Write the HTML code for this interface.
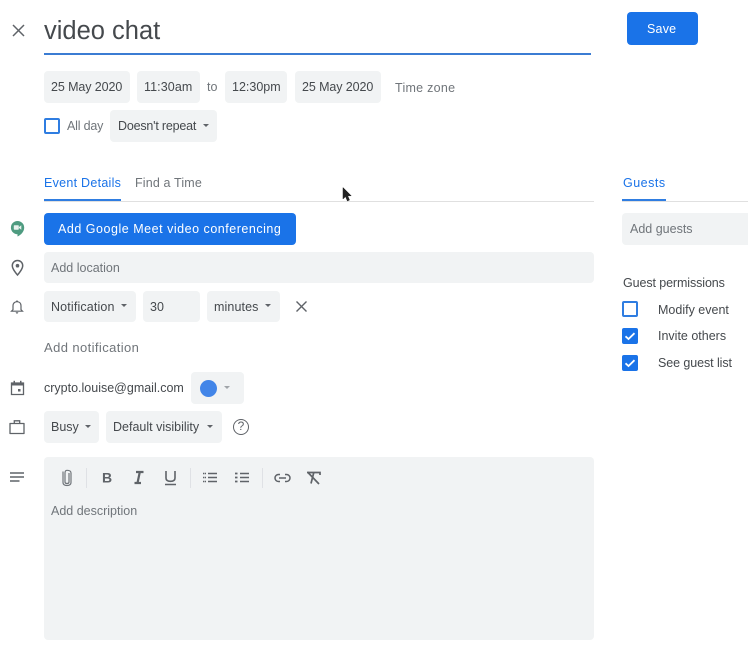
<!DOCTYPE html>
<html><head><meta charset="utf-8"><style>
html,body{margin:0;padding:0;background:#fff}
#p{position:relative;width:748px;height:654px;overflow:hidden;background:#fff;font-family:"Liberation Sans",sans-serif;font-size:12.5px;color:#45494d;filter:blur(.35px)}
.a{position:absolute}
.c{position:absolute;background:#f1f3f4;border-radius:4px}
.t{position:absolute;white-space:nowrap;letter-spacing:0;line-height:16px}
.g{color:#70757a}
.d{position:absolute;width:0;height:0;border-left:3.5px solid transparent;border-right:3.5px solid transparent;border-top:3.5px solid #5f6368}
.cb{position:absolute;left:622px;width:16px;height:16px;box-sizing:border-box;border-radius:2px}
svg{position:absolute;overflow:visible}
</style></head><body><div id="p">

<svg style="left:12px;top:24px" width="13" height="13" viewBox="0 0 13 13"><path d="M1 1L12 12M12 1L1 12" stroke="#5f6368" stroke-width="1.500" fill="none"/></svg>
<div class="t" style="left:44px;top:16px;font-size:25.500px;line-height:30px">video chat</div>
<div class="a" style="left:44px;top:53px;width:547px;height:2px;background:#3b7cd3"></div>
<div class="a" style="left:627px;top:12px;width:71px;height:33px;background:#1a73e8;border-radius:4px"></div>
<div class="t" style="left:647px;top:21px;color:#fff;letter-spacing:.2px">Save</div>

<div class="c" style="left:44px;top:71px;width:86px;height:32px"></div><div class="t" style="left:51px;top:79px;letter-spacing:-.1px">25 May 2020</div>
<div class="c" style="left:137px;top:71px;width:63px;height:32px"></div><div class="t" style="left:144px;top:79px;letter-spacing:.1px">11:30am</div>
<div class="t g" style="left:207px;top:79px">to</div>
<div class="c" style="left:225px;top:71px;width:62px;height:32px"></div><div class="t" style="left:232px;top:79px">12:30pm</div>
<div class="c" style="left:295px;top:71px;width:86px;height:32px"></div><div class="t" style="left:302px;top:79px;letter-spacing:-.1px">25 May 2020</div>
<div class="t g" style="left:395px;top:80px;letter-spacing:.27px">Time zone</div>

<div class="a" style="left:44px;top:118px;width:16px;height:16px;box-sizing:border-box;border:2px solid #2f7de1;border-radius:2px"></div>
<div class="t g" style="left:67px;top:118px;letter-spacing:-.2px">All day</div>
<div class="c" style="left:110px;top:110px;width:107px;height:32px"></div><div class="t" style="left:118px;top:118px;letter-spacing:-.2px">Doesn't repeat</div><div class="d" style="left:203px;top:124px"></div>

<div class="t" style="left:44px;top:175px;color:#1a73e8;letter-spacing:.27px">Event Details</div>
<div class="t g" style="left:135px;top:175px;letter-spacing:.15px">Find a Time</div>
<div class="t" style="left:623px;top:175px;color:#1a73e8;letter-spacing:.5px">Guests</div>
<div class="a" style="left:44px;top:201px;width:550px;height:1px;background:#e0e0e0"></div>
<div class="a" style="left:622px;top:201px;width:126px;height:1px;background:#e0e0e0"></div>
<div class="a" style="left:44px;top:199px;width:77px;height:2px;background:#2f7de1"></div>
<div class="a" style="left:622px;top:199px;width:44px;height:2px;background:#2f7de1"></div>

<svg style="left:342px;top:187px" width="11" height="16" viewBox="0 0 11 16"><path d="M1 0.5V12L3.600 9.600L5.400 14L7.500 13L5.700 8.800H9.200Z" fill="#222" stroke="#222" stroke-width=".5"/></svg>

<svg style="left:10px;top:220px" width="15" height="17" viewBox="0 0 15 17"><path d="M7.500 1A6.600 6.600 0 0 0 7.500 14.200V16.500C11 15 14.200 11.500 14.200 7.600A6.700 6.700 0 0 0 7.500 1Z" fill="#4e9b80"/><rect x="3.800" y="5.300" width="5" height="4.400" rx=".7" fill="#e8f2ee"/><path d="M9 7L11.300 5.300V9.700L9 8Z" fill="#e8f2ee"/></svg>
<div class="a" style="left:44px;top:213px;width:252px;height:32px;background:#1a73e8;border-radius:4px"></div>
<div class="t" style="left:58px;top:221px;color:#fff;letter-spacing:.52px">Add Google Meet video conferencing</div>

<svg style="left:10px;top:259px" width="15" height="18" viewBox="0 0 15 18"><path d="M7.500 1.500C4.500 1.500 2.300 3.800 2.300 6.700C2.300 10.300 7.500 16 7.500 16C7.500 16 12.700 10.300 12.700 6.700C12.700 3.800 10.500 1.500 7.500 1.500Z" fill="none" stroke="#5f6368" stroke-width="1.500"/><circle cx="7.500" cy="6.700" r="1.800" fill="#5f6368"/></svg>
<div class="c" style="left:44px;top:252px;width:550px;height:31px"></div><div class="t g" style="left:51px;top:260px">Add location</div>

<svg style="left:10px;top:299px" width="14" height="16" viewBox="0 0 14 16"><path d="M1.500 12.200H12.500L11 10.600V6.800C11 4.400 9.400 2.700 7 2.700C4.600 2.700 3 4.400 3 6.800V10.600Z" fill="none" stroke="#5f6368" stroke-width="1.200"/><path d="M6 1.600H8V3H6ZM5.700 13.200H8.300C8.300 14 7.700 14.600 7 14.600C6.300 14.600 5.700 14 5.700 13.200Z" fill="#5f6368"/></svg>
<div class="c" style="left:44px;top:291px;width:92px;height:31px"></div><div class="t" style="left:51px;top:299px;letter-spacing:.15px">Notification</div><div class="d" style="left:121px;top:304px"></div>
<div class="c" style="left:143px;top:291px;width:57px;height:31px"></div><div class="t" style="left:150px;top:299px">30</div>
<div class="c" style="left:207px;top:291px;width:73px;height:31px"></div><div class="t" style="left:214px;top:299px;letter-spacing:.1px">minutes</div><div class="d" style="left:265px;top:304px"></div>
<svg style="left:296px;top:301px" width="11" height="11" viewBox="0 0 11 11"><path d="M.5 .5L10.500 10.500M10.500 .5L.5 10.500" stroke="#5f6368" stroke-width="1.400" fill="none"/></svg>
<div class="t g" style="left:44px;top:340px;font-size:13px;letter-spacing:.4px">Add notification</div>

<svg style="left:10px;top:380px" width="15" height="16" viewBox="0 0 15 16"><path d="M1.500 3H13.500V14.500H1.500Z" fill="none" stroke="#5f6368" stroke-width="1.300"/><path d="M1 2.500H14V5.500H1Z" fill="#5f6368"/><rect x="3.500" y=".8" width="1.500" height="2" fill="#5f6368"/><rect x="10" y=".8" width="1.500" height="2" fill="#5f6368"/><rect x="8" y="9" width="2.500" height="2.500" fill="#5f6368"/></svg>
<div class="t" style="left:44px;top:380px">crypto.louise@gmail.com</div>
<div class="c" style="left:191px;top:372px;width:53px;height:32px"></div>
<div class="a" style="left:200px;top:380px;width:17px;height:17px;border-radius:50%;background:#4285e8"></div><div class="d" style="left:224px;top:386px;border-top-color:#a0a4a8"></div>

<svg style="left:9px;top:419px" width="16" height="16" viewBox="0 0 16 16"><path d="M1 4.500H15V14.500H1Z" fill="none" stroke="#5f6368" stroke-width="1.300" stroke-linejoin="round"/><path d="M5.300 4.500V1.800H10.700V4.500" fill="none" stroke="#5f6368" stroke-width="1.300"/></svg>
<div class="c" style="left:44px;top:411px;width:55px;height:32px"></div><div class="t" style="left:51px;top:419px">Busy</div><div class="d" style="left:85px;top:425px"></div>
<div class="c" style="left:106px;top:411px;width:116px;height:32px"></div><div class="t" style="left:113px;top:419px">Default visibility</div><div class="d" style="left:207px;top:425px"></div>
<div class="a" style="left:233px;top:419px;width:16px;height:16px;box-sizing:border-box;border:1.500px solid #5f6368;border-radius:50%;text-align:center;font-size:12px;line-height:13px;color:#5f6368">?</div>

<svg style="left:10px;top:472px" width="15" height="10" viewBox="0 0 15 10"><path d="M0 1H14M0 5H14M0 9H9.500" stroke="#5f6368" stroke-width="1.500" fill="none"/></svg>
<div class="c" style="left:44px;top:457px;width:550px;height:183px"></div>
<svg style="left:44px;top:457px" width="550" height="40" viewBox="0 0 550 40" fill="none" stroke="#70757a">
<path d="M19 14.500V25.500C19 27.500 20.300 28.500 23 28.500C25.700 28.500 27 27.500 27 25.500V16C27 14.300 25.700 13.300 23 13.300C21.300 13.300 21 15 21 16V25C21 26 21.800 26.500 23 26.500C24 26.500 25 26 25 25V16" stroke-width="1.200"/>
<path d="M42.500 11V31M146.500 11V31M218.500 11V31" stroke="#dfe1e5" stroke-width="1"/>
<text x="58" y="25.500" font-family="Liberation Sans" font-size="14" font-weight="bold" fill="#5f6368" stroke="none">B</text>
<path d="M92 15H99.500M90.500 26H97M95.800 15L93.500 26" stroke="#5f6368" stroke-width="2.200"/>
<path d="M122 14V21C122 23 123.500 24.300 126.500 24.300C129.500 24.300 131 23 131 21V14M121 27.500H132" stroke="#5f6368" stroke-width="1.600"/>
<path d="M164 16.500H173M164 20.500H173M164 24.500H173" stroke="#5f6368" stroke-width="1.400"/>
<path d="M159 16.500H162M159 20.500H162M159 24.500H162" stroke="#5f6368" stroke-width="1.500" stroke-dasharray="1.500 .5"/>
<path d="M196 16.500H205M196 20.500H205M196 24.500H205" stroke="#5f6368" stroke-width="1.400"/>
<path d="M191 16.500H193.500M191 20.500H193.500M191 24.500H193.500" stroke="#5f6368" stroke-width="1.700"/>
<path d="M236 17.500H234.500A3.500 3.500 0 0 0 234.500 24.500H236M241 17.500H242.500A3.500 3.500 0 0 1 242.500 24.500H241M235 21H242" stroke="#5f6368" stroke-width="1.500"/>
<path d="M263 15.500H276V18M269.800 15.500L267 26.500M263.500 15L275 27" stroke="#5f6368" stroke-width="1.700"/>
</svg>
<div class="t g" style="left:51px;top:503px">Add description</div>

<div class="c" style="left:622px;top:213px;width:130px;height:32px"></div><div class="t g" style="left:630px;top:221px">Add guests</div>
<div class="t" style="left:623px;top:275px;letter-spacing:-.1px">Guest permissions</div>
<div class="cb" style="top:301px;border:2px solid #2f7de1"></div><div class="t" style="left:658px;top:302px">Modify event</div>
<div class="cb" style="top:328px;background:#1a73e8"></div><svg style="left:622px;top:328px" width="16" height="16" viewBox="0 0 16 16"><path d="M3.500 8.300L6.500 11L12.500 5.200" stroke="#fff" stroke-width="1.800" fill="none"/></svg><div class="t" style="left:658px;top:328px">Invite others</div>
<div class="cb" style="top:355px;background:#1a73e8"></div><svg style="left:622px;top:355px" width="16" height="16" viewBox="0 0 16 16"><path d="M3.500 8.300L6.500 11L12.500 5.200" stroke="#fff" stroke-width="1.800" fill="none"/></svg><div class="t" style="left:658px;top:355px;letter-spacing:-.08px">See guest list</div>
</div></body></html>
